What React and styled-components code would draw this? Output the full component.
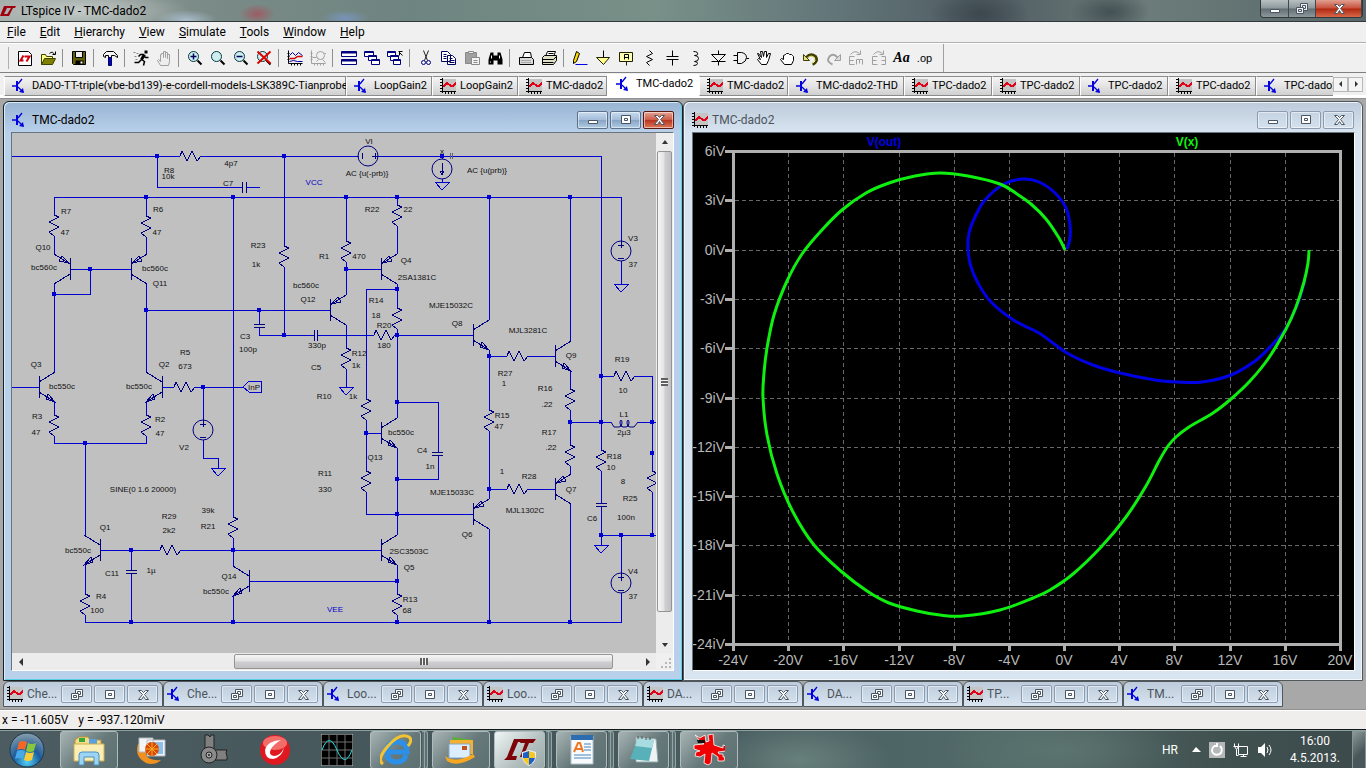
import React from "react";
import styled, { createGlobalStyle, css } from "styled-components";

/* ---------- data ---------- */

const menus = ["File", "Edit", "Hierarchy", "View", "Simulate", "Tools", "Window", "Help"];

const tabs = [
  { title: "DADO-TT-triple(vbe-bd139)-e-cordell-models-LSK389C-Tianprobe", kind: "asc", width: 342 },
  { title: "LoopGain2", kind: "asc", width: 86 },
  { title: "LoopGain2", kind: "plt", width: 86 },
  { title: "TMC-dado2", kind: "plt", width: 89 },
  { title: "TMC-dado2", kind: "asc", width: 92, active: true },
  { title: "TMC-dado2", kind: "plt", width: 89 },
  { title: "TMC-dado2-THD", kind: "asc", width: 116 },
  { title: "TPC-dado2", kind: "plt", width: 88 },
  { title: "TPC-dado2", kind: "plt", width: 88 },
  { title: "TPC-dado2", kind: "asc", width: 88 },
  { title: "TPC-dado2", kind: "plt", width: 88 },
  { title: "TPC-dado2", kind: "asc", width: 88 },
];

const minimized = [
  ["Che...", "plt"],
  ["Che...", "asc"],
  ["Loo...", "asc"],
  ["Loo...", "plt"],
  ["DA...", "plt"],
  ["DA...", "asc"],
  ["TP...", "plt"],
  ["TM...", "asc"],
];

// wires of the schematic, one polyline each
const wires = [
  "12,156 180,156", "201,156 359,156", "378,156 601,156 601,450", "157,156 157,187 242,187",
  "246,187 260,187", "54,215 54,197 621,197 621,241", "54,236 54,254", "146,197 146,216",
  "146,237 146,254", "70,269 131,269", "90,269 90,294 54,294", "54,284 54,372", "146,284 146,372",
  "146,310 330,310", "233,197 233,517", "233,538 233,566", "259,310 259,324", "259,327 259,335 314,335",
  "317,335 374,335", "395,335 473,335", "284,156 284,246", "284,267 284,335", "346,197 346,241",
  "346,262 346,295", "346,269 381,269", "397,197 397,205", "397,226 397,254", "397,284 397,308",
  "397,289 366,289 366,399", "397,329 397,418", "346,325 346,348", "346,369 346,387",
  "489,197 489,320", "489,351 489,410", "489,356 507,356", "528,356 555,356", "570,197 570,341",
  "570,371 570,389", "570,410 570,445", "570,422 611,422", "638,422 656,422", "570,466 570,474",
  "570,504 570,622", "366,420 366,471", "366,433 381,433", "366,492 366,514 473,514",
  "397,402 438,402 438,452", "438,455 438,479 397,479", "397,448 397,535", "489,431 489,499",
  "489,489 507,489", "528,489 555,489", "489,529 489,622", "397,565 397,594", "397,615 397,622",
  "100,550 160,550", "181,550 381,550", "249,581 397,581", "233,596 233,622", "131,550 131,570",
  "131,573 131,622", "85,535 85,443", "85,565 85,594", "85,615 85,622 621,622 621,593",
  "54,402 54,415", "54,436 54,443 146,443 146,436", "146,402 146,415", "12,387 39,387",
  "162,387 174,387", "195,387 243,387", "203,387 203,420", "203,440 203,458 218,458 218,468",
  "442,156 442,159", "442,179 442,182", "621,261 621,284", "601,376 614,376", "635,376 652,376 652,471",
  "652,492 652,535", "601,471 601,503", "601,506 601,545", "601,535 656,535", "621,535 621,574",
];

const dots = [
  [157, 156], [284, 156], [442, 156], [146, 197], [233, 197], [346, 197], [397, 197], [489, 197],
  [570, 197], [90, 269], [54, 294], [146, 310], [259, 310], [284, 335], [346, 269], [397, 289],
  [397, 335], [489, 356], [601, 376], [601, 422], [570, 422], [652, 422], [652, 453], [652, 535],
  [601, 535], [621, 535], [397, 402], [366, 433], [397, 479], [397, 514], [489, 489], [397, 581],
  [233, 550], [131, 550], [131, 622], [233, 622], [397, 622], [489, 622], [570, 622], [85, 443],
  [203, 387],
];

const resistorsV = [
  [54, 215], [146, 216], [284, 246], [346, 241], [397, 205], [397, 308], [346, 348], [366, 399],
  [366, 471], [489, 410], [570, 389], [570, 445], [601, 450], [652, 471], [397, 594], [233, 517],
  [85, 594], [54, 415], [146, 415],
];

const resistorsH = [[180, 156], [374, 335], [507, 356], [507, 489], [614, 376], [160, 550], [174, 387]];

// base x, base y, side of the legs, pnp or npn
const transistors = [
  [70, 269, -1, "pnp"], [131, 269, 1, "pnp"], [330, 310, 1, "pnp"], [381, 269, 1, "pnp"],
  [555, 489, 1, "pnp"], [473, 514, 1, "pnp"], [473, 335, 1, "npn"], [555, 356, 1, "npn"],
  [381, 433, 1, "npn"], [381, 550, 1, "npn"], [39, 387, 1, "npn"], [162, 387, -1, "npn"],
  [100, 550, -1, "npn"], [249, 581, -1, "npn"],
];

const grounds = [[442, 182], [621, 284], [346, 387], [218, 468], [601, 545]];

const labels = [
  ["R8", 169, 173], ["10k", 168, 179], ["4p7", 231, 166], ["C7", 228, 186], ["R7", 66, 214],
  ["47", 65, 235], ["Q10", 43, 250], ["bc560c", 44, 270], ["R6", 158, 212], ["47", 157, 235],
  ["bc560c", 155, 271], ["Q11", 160, 286], ["R23", 258, 248], ["1k", 256, 267], ["R1", 324, 259],
  ["bc560c", 306, 288], ["Q12", 308, 302], ["C3", 245, 339], ["100p", 248, 352], ["330p", 317, 348],
  ["C5", 316, 370], ["R5", 185, 355], ["673", 185, 369], ["Q3", 36, 367], ["bc550c", 62, 389],
  ["Q2", 164, 367], ["bc550c", 139, 389], ["InP", 254, 390], ["R10", 324, 399], ["VI", 369, 144],
  ["AC {u(-prb)}", 367, 176], ["x", 442, 154], ["AC {u(prb)}", 487, 173], ["R22", 372, 212],
  ["22", 408, 212], ["470", 359, 259], ["Q4", 406, 263], ["2SA1381C", 417, 280], ["R14", 376, 303],
  ["18", 376, 318], ["R20", 384, 328], ["180", 384, 348], ["MJE15032C", 451, 308], ["Q8", 457, 326],
  ["MJL3281C", 528, 333], ["R12", 359, 356], ["1k", 356, 368], ["1k", 353, 399], ["R27", 505, 376],
  ["1", 504, 386], ["Q9", 571, 358], ["R16", 545, 391], ["V3", 633, 241], ["37", 633, 267],
  ["R19", 622, 362], ["10", 623, 393], ["R3", 37, 419], ["47", 36, 435], ["R2", 160, 422],
  ["47", 160, 436], ["V2", 184, 450], ["SINE(0 1.6 20000)", 143, 492], ["R29", 169, 519],
  ["2k2", 169, 533], ["39k", 208, 513], ["R21", 208, 529], ["Q1", 105, 530], ["bc550c", 78, 553],
  ["C11", 112, 576], ["1µ", 151, 573], ["Q14", 229, 579], ["bc550c", 216, 594], ["R4", 101, 599],
  ["100", 97, 613], ["R11", 325, 476], ["330", 325, 492], [".22", 547, 407], ["R15", 502, 418],
  ["47", 499, 429], ["R17", 549, 435], [".22", 551, 450], ["bc550c", 401, 435], ["Q13", 375, 460],
  ["C4", 422, 453], ["1n", 430, 469], ["MJE15033C", 452, 495], ["1", 502, 474], ["R28", 529, 479],
  ["Q7", 571, 492], ["MJL1302C", 525, 513], ["Q6", 467, 537], ["L1", 624, 417], ["2µ3", 624, 435],
  ["R18", 614, 459], ["10", 611, 470], ["8", 623, 484], ["R25", 630, 501], ["C6", 592, 521],
  ["100n", 626, 520], ["2SC3503C", 409, 554], ["Q5", 409, 570], ["R13", 410, 602], ["68", 407, 613],
  ["V4", 633, 574], ["37", 633, 599],
];

const greenTrace = [
  [1065, 250], [1059, 238], [1046, 219], [1031, 204], [1017, 194], [1000, 184], [968, 176], [940, 173],
  [915, 176], [889, 183], [866, 193], [842, 210], [821, 231], [802, 254], [787, 281], [774, 315],
  [767, 348], [764, 373], [763, 398], [767, 435], [777, 474], [793, 512], [814, 545], [842, 572],
  [867, 591], [889, 603], [917, 611], [940, 615], [963, 616], [1000, 610], [1033, 598], [1050, 590],
  [1073, 574], [1102, 546], [1126, 517], [1146, 486], [1159, 461], [1168, 446], [1176, 437],
  [1189, 427], [1213, 413], [1231, 399], [1250, 381], [1268, 359], [1286, 329], [1296, 307],
  [1304, 282], [1308, 263], [1309, 250],
];

const blueTrace = [
  [1067, 249], [1070, 238], [1070, 225], [1066, 208], [1055, 193], [1039, 182], [1023, 179],
  [1004, 184], [985, 200], [975, 217], [969, 233], [968, 250], [971, 267], [978, 283], [991, 302],
  [1015, 321], [1039, 333], [1067, 353], [1093, 365], [1120, 373], [1155, 380], [1178, 382],
  [1202, 382], [1231, 375], [1255, 361], [1272, 345], [1286, 328], [1298, 303], [1305, 280],
];

// smooth curve through the points
const toPath = pts =>
  pts.slice(0, -1).reduce((d, p, i) => {
    const a = pts[i - 1] || p;
    const q = pts[i + 1];
    const b = pts[i + 2] || q;
    const c1 = [p[0] + (q[0] - a[0]) / 6, p[1] + (q[1] - a[1]) / 6];
    const c2 = [q[0] - (b[0] - p[0]) / 6, q[1] - (b[1] - p[1]) / 6];
    return `${d} C${c1.join(" ")} ${c2.join(" ")} ${q.join(" ")}`;
  }, `M${pts[0].join(" ")}`);

/* ---------- small icons ---------- */

const AscIcon = () => (
  <Icon viewBox="0 0 16 16">
    <path d="M0 8h5M10 1L6 6M6 9l5 5" stroke="#0000e0" strokeWidth="1.3" fill="none" />
    <path d="M4 3h2v10H4z" fill="#0000e0" />
    <path d="M7 14l4-4 1 5z" fill="#0000e0" />
  </Icon>
);

const PltIcon = () => (
  <Icon viewBox="0 0 16 16" shapeRendering="crispEdges">
    <path d="M2 1h14v12H2z" fill="#c4c4c4" />
    <path d="M2 0v15M2 13h14M0 1h2M0 4h2M0 7h2M0 10h2M0 13h2M5 13v3M8 13v3M11 13v3M14 13v3" stroke="#000" fill="none" />
    <path d="M3 9l4-4 4 3h2l3-3" stroke="#e00018" strokeWidth="2" fill="none" />
  </Icon>
);

const LtLogo = () => (
  <Icon viewBox="0 0 16 16">
    <path d="M4 3h4L4 11h4l-1 2H0zM8 3h8l-1 2h-2l-4 8H6l5-8H7z" fill="#a00010" />
  </Icon>
);

const glyphs = {
  min: <path d="M2 7h9v3H2z" />,
  max: (
    <>
      <path d="M2 2h9v8H2z" />
      <path d="M5 5h3v2H5z" />
    </>
  ),
  restore: (
    <>
      <path d="M5 1h7v7H5z" />
      <path d="M7 3h3v3H7z" />
      <path d="M1 5h7v6H1z" />
      <path d="M3 7h3v2H3z" />
    </>
  ),
  close: <path d="M2 2h3l2 2 2-2h3L8 6l4 5H9L7 8l-2 3H2l4-5z" />,
};

const WinGlyph = ({ kind, stroke = "#4a5564", fill = "#fff" }) => (
  <svg width="14" height="13" viewBox="-0.5 -0.5 14 13" fill={fill} stroke={stroke}>
    {glyphs[kind]}
  </svg>
);

const lens = (
  <>
    <circle cx="6" cy="6" r="5" fill="#cfeef0" stroke="#00393c" />
    <path d="M10 10l4 4" stroke="#000" strokeWidth="2" />
  </>
);

const hand = "M4 15l-3-5 1-1 2 2V4h1V3h2v4V1h2v6V2h2v6V4h2v7l-1 4z";

// toolbar pictures; null is a separator
const tools = [
  ["New schematic", <><path d="M1 1h10l3 3v11H1z" fill="#fff" stroke="#000" /><path d="M6 5L3 10h3M7 6h5l-3 5" stroke="#d00010" strokeWidth="2" fill="none" /></>],
  ["Open", <><path d="M1 14V4h4l1 2h6v3" fill="#ffff80" stroke="#404000" /><path d="M1 14l3-6h11l-3 6z" fill="#808000" stroke="#404000" /><path d="M9 3q3-3 5 1M12 4h3V1" fill="none" stroke="#000" /></>],
  null,
  ["Save", <><path d="M1 1h13v13H2l-1-1z" fill="#606000" stroke="#000" /><path d="M4 1h7v6H4z" fill="#eee" stroke="#000" /><path d="M4 10h8v4H4z" fill="#000" /><path d="M9 11h2v2H9z" fill="#fff" /></>],
  null,
  ["Control panel", <><path d="M1 6V4l3-3h7l4 4v2l-3-2H9v2H6V5H3v2z" fill="#f4f4f4" stroke="#000" /><path d="M6 7h3v8H6z" fill="#0000c8" stroke="#000060" /></>],
  null,
  ["Run", <><path d="M11 0h3v3h-3z" fill="#000" /><path d="M11 4L8 9" stroke="#000" strokeWidth="3" /><path d="M8 9l3 2-1 4M8 9l-3 3H1M10 4L7 4 5 6M10 5l2 2h3" stroke="#000" strokeWidth="1.5" fill="none" /><path d="M0 2h2M3 3h2M1 6h2M2 9h2" stroke="#888" /></>],
  ["Halt", <path d={hand} fill="#eee" stroke="#a0a0a0" />],
  null,
  ["Zoom in", <>{lens}<path d="M6 3v6M3 6h6" stroke="#000060" strokeWidth="1.5" /></>],
  ["Pan", lens],
  ["Zoom out", <>{lens}<path d="M3 6h6" stroke="#000060" strokeWidth="1.5" /></>],
  ["Zoom full extents", <>{lens}<path d="M1 1l13 12M14 1L1 13" stroke="#e00000" strokeWidth="2" /></>],
  null,
  ["Autorange", <><path d="M1 0v13h14M0 3h2M0 6h2M0 9h2M4 13v2M7 13v2M10 13v2M13 13v2" stroke="#000" fill="none" /><path d="M2 5l3-3 3 3 3-3 4 3" stroke="#0000a0" fill="none" /><path d="M2 8h5l3-2h5" stroke="#d00000" strokeWidth="1.5" fill="none" /><path d="M2 11l4-1 4 1h5" stroke="#0000a0" fill="none" /></>],
  ["Plot settings", <><path d="M1 0v13h14M0 3h2M0 6h2M0 9h2M4 13v2M7 13v2M10 13v2M13 13v2" stroke="#a0a0a0" fill="none" /><circle cx="10" cy="5" r="4" fill="none" stroke="#a0a0a0" /><path d="M2 7h4M6 11l2-2M12 9l3 3M14 3h2" stroke="#a0a0a0" /></>],
  null,
  ["Tile", <><path d="M0 1h15v5H0zM0 9h15v5H0z" fill="#fff" stroke="#000080" /><path d="M0 2h15M0 10h15" stroke="#000080" strokeWidth="2" /></>],
  ["Cascade", <><path d="M0 1h9v5H0zM4 5h8v5H4zM7 9h8v5H7z" fill="#fff" stroke="#000080" /><path d="M0 2h9M4 6h8M7 10h8" stroke="#000080" strokeWidth="1" /></>],
  ["Close all", <><path d="M0 1h8v5H0zM3 5h8v5H3zM6 9h7v5H6z" fill="#fff" stroke="#000080" /><path d="M0 2h8M3 6h8M6 10h7" stroke="#000080" strokeWidth="1" /><path d="M11 1h4M12 1v4M12 2l3 3" stroke="#000" /></>],
  null,
  ["Cut", <><path d="M5 0l4 10M10 0L6 10" stroke="#222" /><circle cx="5" cy="12" r="2" fill="none" stroke="#000080" /><circle cx="10" cy="12" r="2" fill="none" stroke="#000080" /></>],
  ["Copy", <><path d="M0 1h6l3 3v7H0zM6 5h5l3 3v6H6z" fill="#fff" stroke="#000060" /><path d="M2 4h3M2 6h3M2 8h3M8 8h3M8 10h5M8 12h5" stroke="#000060" /></>],
  ["Paste", <><path d="M1 2h11v11H1z" fill="#a0a0a0" stroke="#888" /><path d="M4 1h5v2H4z" fill="#eee" stroke="#888" /><path d="M7 7h8v7H7z" fill="#f4f4f4" stroke="#888" /><path d="M9 10h4M9 12h4" stroke="#888" /></>],
  ["Find", <><path d="M3 2h3v3h4V2h3l2 7v5h-5v-4H6v4H1V9z" fill="#000" /><path d="M4 5v3M12 5v3M3 11v1" stroke="#fff" /></>],
  null,
  ["Print", <><path d="M4 7l2-5h6l1 5" fill="#fff" stroke="#000" /><path d="M1 7h12l2 2v5H1z" fill="#d8d8d8" stroke="#000" /><path d="M3 10h10M3 12h10" stroke="#777" strokeDasharray="1 1" /></>],
  ["Print setup", <><path d="M4 6l2-5h8l-2 5" fill="#fff" stroke="#000" /><path d="M1 7l2-2h12v5l-3 4H1z" fill="#e0e0c8" stroke="#000" /><path d="M7 3h5M1 9h11M1 12h11M12 9l3-3" stroke="#000" /></>],
  null,
  ["Wire", <><path d="M4 1l3 2-3 8-3 2v-3z" fill="#ffd800" stroke="#000" /><path d="M3 14h12" stroke="#0000e0" /></>],
  ["Ground", <><path d="M8 0v7" stroke="#000" /><path d="M1 7h13l-6 7z" fill="#ffff90" stroke="#202000" /></>],
  ["Label net", <><path d="M1 2h13v9H1zM8 11v4" fill="#ffffb0" stroke="#202000" /><path d="M6 9V4h4v5M6 7h4" fill="none" stroke="#000" /></>],
  ["Resistor", <path d="M8 0l3 3-6 3 6 3-6 3 3 3" fill="none" stroke="#000" />],
  ["Capacitor", <path d="M8 0v6M2 6h12M2 9h12M8 9v6" fill="none" stroke="#000" />],
  ["Inductor", <path d="M6 1q5 0 4 3-1 1-3 1 4 0 4 3t-4 3q3 0 3 2t-4 2" fill="none" stroke="#000" />],
  ["Diode", <path d="M8 0v4M1 4h14l-7 7zM1 11h14M8 11v4" fill="none" stroke="#000" />],
  ["Component", <path d="M0 5h4M0 10h4M4 2h4q5 1 5 5t-5 6H4zM13 8h3" fill="none" stroke="#000" />],
  ["Move", <path d="M5 14L1 9l1-1 2 1-3-6h1l3 4-1-6h2l1 5 1-5h2v6l2-4h2l-2 7-2 4z" fill="#fff" stroke="#000" />],
  ["Drag", <path d="M5 14l-4-5 1-1 2 1V5l2-1 1-1h2l1 1h2l1 1 1 1v4l-2 4z" fill="#fff" stroke="#000" />],
  ["Undo", <><path d="M4 7q4-5 9-1 3 5-3 8" fill="none" stroke="#404000" strokeWidth="3" /><path d="M5 7q4-3 7 0 2 4-2 6" fill="none" stroke="#e8e080" /><path d="M1 4v6h6z" fill="#e8e080" stroke="#404000" /></>],
  ["Redo", <><path d="M12 7Q8 2 4 6q-4 5 3 8" fill="none" stroke="#a0a0a0" strokeWidth="2" /><path d="M15 4v6H9z" fill="#ddd" stroke="#a0a0a0" /></>],
  ["Rotate", <path d="M6 6H1v8h5M1 10h4M8 14V9M8 9h6v5M11 9v4M2 4q4-5 9-1M12 0v4H8" fill="none" stroke="#a0a0a0" />],
  ["Mirror", <path d="M6 6H1v8h5M1 10h4M10 6h4v8h-4M14 10h-4M2 4q4-5 9-1M12 0v4H8" fill="none" stroke="#a0a0a0" />],
  ["Text", "Aa"],
  ["SPICE directive", ".op"],
];

/* ---------- schematic and plot ---------- */

const Resistor = ({ x, y, flat }) => (
  <polyline
    points={
      flat
        ? `${x},${y} ${x + 2},${y - 5} ${x + 7},${y + 5} ${x + 12},${y - 5} ${x + 17},${y + 5} ${x + 21},${y}`
        : `${x},${y} ${x + 5},${y + 2} ${x - 5},${y + 7} ${x + 5},${y + 12} ${x - 5},${y + 17} ${x},${y + 21}`
    }
  />
);

const Transistor = ({ x, y, dir, type }) => {
  const e = type === "pnp" ? -1 : 1;
  const tip = type === "pnp" ? [1, 6] : [16, 15];
  const tail = type === "pnp" ? [[11, 8], [8, 13]] : [[9, 7], [7, 12]];
  const at = ([a, b]) => `${x + dir * a},${y + e * b}`;
  return (
    <>
      <path d={`M${x} ${y - 11}V${y + 11}M${x} ${y - 5}l${dir * 16} -10M${x} ${y + 5}l${dir * 16} 10`} />
      <polygon points={`${at(tip)} ${at(tail[0])} ${at(tail[1])}`} />
    </>
  );
};

const Schematic = () => (
  <SchematicSvg viewBox="12 133 644 520" width="644" height="520">
    <g fill="none" stroke="#0000d0" shapeRendering="crispEdges">
      {wires.map(w => (
        <polyline key={w} points={w} />
      ))}
      {grounds.map(([x, y]) => (
        <path key={`${x}-${y}`} d={`M${x - 7} ${y}h15l-8 8z`} />
      ))}
      <path d="M243 387l6-6h12v11h-12z" />
    </g>
    <g fill="#0000d0" shapeRendering="crispEdges">
      {dots.map(([x, y]) => (
        <rect key={`${x}-${y}`} x={x - 2} y={y - 2} width="4" height="4" />
      ))}
      <path d="M450 153h1v6h-1zM452 153h1v6h-1z" fill="#606070" />
    </g>
    <g fill="none" stroke="#000080" shapeRendering="crispEdges">
      {resistorsV.map(([x, y]) => (
        <Resistor key={`${x}-${y}`} x={x} y={y} />
      ))}
      {resistorsH.map(([x, y]) => (
        <Resistor key={`${x}-${y}`} x={x} y={y} flat />
      ))}
      {transistors.map(([x, y, dir, type]) => (
        <Transistor key={`${x}-${y}`} x={x} y={y} dir={dir} type={type} />
      ))}
      <path d="M242 182v11M246 182v11M254 324h11M254 327h11M314 330v11M317 330v11M432 452h11M432 455h11M596 503h11M596 506h11M126 570h11M126 573h11" />
    </g>
    <g fill="none" stroke="#000080">
      <path d="M611 422l3 5h5q3 0 3-4 0-3-1-3t-1 3q0 4 3 4h3q3 0 3-4 0-3-1-3t-1 3q0 4 3 4h4l4-5" />
      <circle cx="368" cy="156" r="10" />
      <circle cx="442" cy="169" r="10" />
      <circle cx="203" cy="430" r="10" />
      <circle cx="621" cy="251" r="10" />
      <circle cx="621" cy="583" r="10" />
      <path shapeRendering="crispEdges" d="M362 153v6M372 156h6M375 153v6M442 163v12M440 171l2 4 2-4zM200 424h6M203 420v7M200 437h6M618 245h6M621 241v7M618 258h6M618 577h6M621 574v7M618 590h6" />
    </g>
    <PartText>
      {labels.map(([text, x, y]) => (
        <text key={`${x}-${y}`} x={x} y={y}>{text}</text>
      ))}
      <NetText x="314" y="185">VCC</NetText>
      <NetText x="335" y="612">VEE</NetText>
    </PartText>
  </SchematicSvg>
);

const gridX = i => Math.round(733 + (i * 607) / 11);
const gridY = i => Math.round(151 + (i * 493) / 10);

const Plot = () => (
  <PlotSvg viewBox="693 133 661 537">
    <g stroke="#686868" strokeDasharray="4 3" shapeRendering="crispEdges">
      {[...Array(10)].map((_, i) => (
        <path key={i} d={`M${gridX(i + 1)} 153V643`} />
      ))}
      {[...Array(9)].map((_, i) => (
        <path key={i} d={`M735 ${gridY(i + 1)}H1339`} />
      ))}
    </g>
    <g stroke="#b0b0b0" strokeWidth="3" fill="none" shapeRendering="crispEdges">
      <path d="M733 151H1340V644H733z" />
      {[...Array(12)].map((_, i) => (
        <path key={i} d={`M${gridX(i)} 644v7`} />
      ))}
      {[...Array(11)].map((_, i) => (
        <path key={i} d={`M725 ${gridY(i)}h8`} />
      ))}
    </g>
    <path d={toPath(blueTrace)} fill="none" stroke="#0000e4" strokeWidth="3" />
    <path d={toPath(greenTrace)} fill="none" stroke="#10f010" strokeWidth="3" />
    <AxisText>
      {[...Array(11)].map((_, i) => (
        <text key={i} x="725" y={gridY(i) + 5} textAnchor="end">{`${6 - i * 3}iV`}</text>
      ))}
      {[...Array(12)].map((_, i) => (
        <text key={i} x={gridX(i)} y="665" textAnchor="middle">{`${i * 4 - 24}V`}</text>
      ))}
    </AxisText>
    <TraceText x="884" y="146" fill="#0000e4">V(out)</TraceText>
    <TraceText x="1187" y="146" fill="#10f010">V(x)</TraceText>
  </PlotSvg>
);

/* ---------- taskbar pictures ---------- */

const taskItems = [
  ["Explorer", true, false, <><path d="M2 6l4-3h9l2 3h11v20H2z" fill="#f4dc88" stroke="#b89438" /><path d="M6 4h6v4H6z" fill="#38a838" /><path d="M16 5h8v5h-8z" fill="#58a0e0" /><path d="M1 10h30v17H1z" fill="#fbeeb4" stroke="#d0b050" /><path d="M6 31V21q0-3 3-3h14q3 0 3 3v10h-5v-8H11v8z" fill="#9cd4f4" stroke="#4c90c0" /></>],
  ["Presentations", false, false, <><path d="M3 10q-4 13 8 19 9 3 15-3-12 1-15-5V8z" fill="#f09020" /><path d="M4 4h14v14H4zM12 6h18v16H12z" fill="#f4f4f4" stroke="#b0b8c0" /><path d="M14 8h14v12H14z" fill="#8cc0ec" /><circle cx="17" cy="15" r="7" fill="#d84808" /><path d="M17 8v14M10 15h14M12 10l10 10M22 10L12 20" stroke="#f8b020" /></>],
  ["Tool", false, false, <><path d="M8 1h3l2 2 1-2h3v14H8zM16 16h14l-1 3 1 3v4H16z" fill="#808080" stroke="#222" /><circle cx="12" cy="21" r="8" fill="#8a8a8a" stroke="#222" /><circle cx="12" cy="21" r="3" fill="#aaa" stroke="#222" /><circle cx="12" cy="21" r="1" fill="#222" /></>],
  ["Antivirus", false, false, <><circle cx="16" cy="16" r="15" fill="#e01820" /><ellipse cx="16" cy="9" rx="12" ry="7" fill="#f46c68" /><path d="M22 6Q8 7 6 16q0 9 8 9 9-2 11-11-4 8-10 8-6-1-3-7 3-5 10-9z" fill="#fff" /></>],
  ["Scope", false, false, <><path d="M0 0h32v32H0z" fill="#000" stroke="#ddd" /><path d="M8 0v32M16 0v32M24 0v32M0 8h32M0 16h32M0 24h32" stroke="#707070" /><path d="M1 16Q8-3 16 16t15 0" fill="none" stroke="#20e0e0" /></>],
  ["Browser", true, true, <><path d="M26 21q-2 7-9 7-10 0-10-10T17 8q10 0 10 10H9" fill="none" stroke="#2c90e8" strokeWidth="5" /><path d="M3 30Q-4 26 8 12T29 3q4 3-1 9" fill="none" stroke="#f4c430" strokeWidth="3" /></>],
  ["Mail", true, false, <><path d="M8 3l20 3-3 17L4 20z" fill="#5cac38" /><path d="M5 6h23v14H5z" fill="#f4b030" /><path d="M4 10h21v14H4z" fill="#dceefc" stroke="#80a8c8" /><path d="M17 12h5v4h-5z" fill="#c05020" /><path d="M0 22q10 8 28-2l2 3Q12 34 2 27z" fill="#f8a820" /></>],
  ["LTspice IV", true, true, <><path d="M10 5h9l-2 3h-3L8 22h5l-1 4H0l3-3zM18 5h14l-3 4h-4l-6 14h-3l5-14h-5z" fill="#7c0408" /><path d="M25 16l7 2q1 10-7 14-8-4-7-14z" fill="#eee" /><path d="M19 19l6-2v7h-6zM25 24h6q-1 5-6 7z" fill="#1c60c8" /><path d="M25 17l6 2v5h-6zM19 24h6v7q-5-2-6-7z" fill="#f4c820" /></>, true],
  ["WordPad", true, true, <><path d="M5 2h22v28H5z" fill="#f8fafc" stroke="#b0c0d0" /><path d="M5 1h22v5H5z" fill="#2c6cb0" /><path d="M18 10h7M18 13h7M18 16h7M8 21h17M8 24h17" stroke="#4484c0" /><path d="M8 18l4-9h2l3 9M9 15h7" fill="none" stroke="#f07820" strokeWidth="2" /></>],
  ["Notepad", true, true, <><path d="M8 3l20 2 2 23H8z" fill="#eef4f4" stroke="#90a8a8" /><path d="M10 4l16 2-5 21L2 25z" fill="#58b0b8" /><path d="M10 4l16 2-2 8-17-2z" fill="#a8dce0" /><path d="M10 2v3M14 2v3M18 3v3M22 3v3" stroke="#555" /></>],
  ["Mascot", true, false, <><path d="M2 1l5 3 5-3 1 7 3-1-1-6 5-1 1 11 9 3v-3l3 1v5l-8 1 1 2h4v3h2l-1 4h-6v-4l-6-4-1 10-3 2-4-2 1-9-5 3-5-1 1-4 4-1-6-2v-4l10-1-4-3z" fill="#f00000" stroke="#fff" strokeWidth="0.8" /><path d="M4 6h8v3H5z" fill="#111" /></>],
];

/* ---------- page ---------- */

const Captions = ({ active, mini }) => (
  <CaptionRow>
    {[mini ? "restore" : "min", "max", "close"].map(kind => (
      <CaptionButton key={kind} aria-label={kind} $red={active && kind === "close"} $active={active}>
        <WinGlyph kind={kind} />
      </CaptionButton>
    ))}
  </CaptionRow>
);

const Arrow = ({ d }) => (
  <svg width="8" height="8" viewBox="0 0 8 8">
    <path d={d} fill="#333" />
  </svg>
);

const App = () => (
  <Screen>
    <GlobalStyle />
    <TitleBar>
      <LtLogo />
      <TitleText>LTspice IV - TMC-dado2</TitleText>
      <AppButtons>
        <AppButton $width={28} aria-label="Minimize"><WinGlyph kind="min" /></AppButton>
        <AppButton $width={27} aria-label="Restore"><WinGlyph kind="restore" fill="#eee" /></AppButton>
        <AppButton $width={46} $red aria-label="Close"><WinGlyph kind="close" /></AppButton>
      </AppButtons>
    </TitleBar>

    <MenuBar>
      {menus.map(m => (
        <MenuItem key={m}>
          <u>{m[0]}</u>
          {m.slice(1)}
        </MenuItem>
      ))}
    </MenuBar>

    <Toolbar>
      {tools.map((tool, i) =>
        tool === null ? (
          <Separator key={i} />
        ) : (
          <ToolButton key={i} aria-label={tool[0]}>
            {typeof tool[1] === "string" ? (
              <ToolText $italic={tool[1] === "Aa"}>{tool[1]}</ToolText>
            ) : (
              <Icon viewBox="-0.5 -0.5 16 16">{tool[1]}</Icon>
            )}
          </ToolButton>
        )
      )}
      <ToolbarEnd />
    </Toolbar>

    <TabStrip>
      <TabList>
        {tabs.map((t, i) => (
          <Tab key={i} $width={t.width} $active={t.active}>
            {t.kind === "asc" ? <AscIcon /> : <PltIcon />}
            <span>{t.title}</span>
          </Tab>
        ))}
      </TabList>
      <TabArrow aria-label="Scroll left"><Arrow d="M5 1v6L2 4z" /></TabArrow>
      <TabArrow aria-label="Scroll right"><Arrow d="M3 1v6l3-3z" /></TabArrow>
    </TabStrip>

    <Workspace>
      <Windows>
        <ChildWindow $active>
          <ChildTitle>
            <AscIcon />
            <TitleText>TMC-dado2</TitleText>
            <Captions active />
          </ChildTitle>
          <SchematicClient>
            <Canvas>
              <Schematic />
            </Canvas>
            <ScrollBar $vertical>
              <ScrollArrow aria-label="Up"><Arrow d="M1 6h6L4 2z" /></ScrollArrow>
              <ScrollSpace $size={1} />
              <ScrollThumb $vertical $size={461}><Grip $vertical /></ScrollThumb>
              <ScrollSpace $size={24} />
              <ScrollArrow aria-label="Down"><Arrow d="M1 2h6L4 6z" /></ScrollArrow>
            </ScrollBar>
            <ScrollBar>
              <ScrollArrow aria-label="Left"><Arrow d="M6 0v8L2 4z" /></ScrollArrow>
              <ScrollSpace $size={206} />
              <ScrollThumb $size={378}><Grip /></ScrollThumb>
              <ScrollSpace $size={26} />
              <ScrollArrow aria-label="Right"><Arrow d="M2 0v8l4-4z" /></ScrollArrow>
            </ScrollBar>
            <SizeGrip viewBox="0 0 17 17">
              <path d="M13 5h2v2h-2zM13 9h2v2h-2zM9 9h2v2H9zM13 13h2v2h-2zM9 13h2v2H9zM5 13h2v2H5z" fill="#b8b8b8" />
            </SizeGrip>
          </SchematicClient>
        </ChildWindow>

        <ChildWindow>
          <ChildTitle>
            <PltIcon />
            <TitleText>TMC-dado2</TitleText>
            <Captions />
          </ChildTitle>
          <PlotClient>
            <Plot />
          </PlotClient>
        </ChildWindow>
      </Windows>

      <MinimizedRow>
        {minimized.map(([title, kind], i) => (
          <MinimizedWindow key={i}>
            {kind === "asc" ? <AscIcon /> : <PltIcon />}
            <MinimizedTitle>{title}</MinimizedTitle>
            <Captions mini />
          </MinimizedWindow>
        ))}
      </MinimizedRow>
    </Workspace>

    <StatusBar>
      <span>x = -11.605V</span>
      <span>y = -937.120miV</span>
    </StatusBar>

    <Taskbar>
      <StartButton aria-label="Start">
        <svg width="38" height="38" viewBox="0 0 38 38">
          <defs>
            <radialGradient id="orb" cx="50%" cy="85%" r="80%">
              <stop offset="0" stopColor="#50d0f8" />
              <stop offset="0.5" stopColor="#1c5c9c" />
              <stop offset="1" stopColor="#8098a8" />
            </radialGradient>
          </defs>
          <circle cx="19" cy="19" r="17" fill="url(#orb)" stroke="#183850" />
          <path d="M11 11q4-2 8 0l-2 8q-4-2-8 0z" fill="#f06828" />
          <path d="M20 12q4 2 8 0l-2 8q-4 2-8 0z" fill="#88c838" />
          <path d="M9 20q4-2 8 0l-2 8q-4-2-8 0z" fill="#48a8e8" />
          <path d="M18 21q4 2 8 0l-2 8q-4 2-8 0z" fill="#f8cc38" />
        </svg>
      </StartButton>
      {taskItems.map(([name, framed, stacked, art, current]) => (
        <TaskSlot key={name}>
          <TaskButton aria-label={name} $framed={framed} $current={current}>
            <svg width="32" height="32" viewBox="0 0 32 32">{art}</svg>
          </TaskButton>
          {stacked && <TaskStack />}
        </TaskSlot>
      ))}
      <Tray>
        <Language>HR</Language>
        <svg width="9" height="5" viewBox="0 0 9 5"><path d="M0 5h9L4 0z" fill="#fff" /></svg>
        <svg width="16" height="16" viewBox="0 0 16 16">
          <path d="M0 0h16v16H0z" fill="#b4b8b8" />
          <path d="M5 4q-4 5 0 8 4 2 7-1 2-4-1-7M5 4h3V1" fill="none" stroke="#fff" strokeWidth="2" />
        </svg>
        <svg width="16" height="16" viewBox="-0.5 -0.5 16 16">
          <path d="M5 4h9v8H5zM7 14h6M10 12v2M3 7v6h2M1 1v3l2 3 2-3V1M0 4h5" fill="none" stroke="#fff" />
        </svg>
        <svg width="16" height="16" viewBox="0 0 16 16">
          <path d="M1 5h3l4-4v14l-4-4H1z" fill="#fff" />
          <path d="M10 5q2 3 0 6M12 3q4 5 0 10" fill="none" stroke="#fff" />
        </svg>
        <Clock>
          <span>16:00</span>
          <span>4.5.2013.</span>
        </Clock>
      </Tray>
      <ShowDesktop aria-label="Show desktop" />
    </Taskbar>
  </Screen>
);

/* ---------- styles ---------- */

const GlobalStyle = createGlobalStyle`
  * {
    box-sizing: border-box;
  }
  body {
    margin: 0;
    overflow: hidden;
    font-family: Roboto, "Liberation Sans", sans-serif;
    font-size: 12px;
    color: #000;
  }
  button {
    margin: 0;
    padding: 0;
    border: 0;
    background: none;
    font: inherit;
    color: inherit;
  }
  svg {
    display: block;
  }
`;

const center = css`
  display: flex;
  align-items: center;
  justify-content: center;
`;

const Screen = styled.div`
  display: flex;
  flex-direction: column;
  min-height: 100vh;
  background: #f0f0f0;
`;

const Icon = styled.svg`
  flex: none;
  width: 16px;
  height: 16px;
`;

const TitleBar = styled.header`
  display: flex;
  align-items: center;
  gap: 5px;
  height: 22px;
  border-bottom: 1px solid #30383a;
  background: radial-gradient(ellipse 30px 10px at 186px 20px, #a8bccc, transparent),
    radial-gradient(ellipse 18px 10px at 257px 14px, #9c5c64, transparent),
    radial-gradient(ellipse 24px 8px at 345px 18px, #7894b8, transparent),
    radial-gradient(ellipse 110px 22px at 80px 11px, #c4cac8, transparent),
    radial-gradient(ellipse 50px 24px at 980px 14px, #3c484e, transparent),
    radial-gradient(ellipse 40px 20px at 1110px 12px, #445054, transparent),
    linear-gradient(90deg, #a0aaa6, #7c8c88 14%, #6e8480 30%, #789088 48%, #64787a 60%, #505c62 72%, #6c7c7a 84%, #58686a);
`;

const TitleText = styled.span`
  flex: 1;
  white-space: nowrap;
`;

const AppButtons = styled.div`
  display: flex;
  align-self: flex-start;
  height: 18px;
  margin-right: 3px;
  border: 1px solid #30383c;
  border-top: 0;
  border-radius: 0 0 4px 4px;
  overflow: hidden;
`;

const AppButton = styled.button`
  ${center}
  width: ${props => props.$width}px;
  border-right: 1px solid #40484c;
  background: ${props =>
    props.$red
      ? "linear-gradient(#e0a090, #c8503c 48%, #b02810 52%, #d86848)"
      : "linear-gradient(#b8c0c2, #8c989c 48%, #626e72 52%, #8c989a)"};
`;

const MenuBar = styled.nav`
  display: flex;
  align-items: center;
  gap: 14px;
  height: 21px;
  padding: 0 7px;
  border-bottom: 1px solid #b0b0b0;
`;

const MenuItem = styled.button`
  line-height: 16px;
`;

const Toolbar = styled.div`
  display: flex;
  align-items: center;
  height: 30px;
  padding-left: 8px;
  border-top: 1px solid #fff;
  border-bottom: 1px solid #808080;

  &::before {
    content: "";
    width: 4px;
    height: 22px;
    margin-left: -4px;
    margin-right: 4px;
    border-right: 1px solid #b0b0b0;
  }
`;

const ToolButton = styled.button`
  ${center}
  width: 23px;
  height: 22px;
`;

const ToolText = styled.span`
  font-family: ${props => (props.$italic ? '"Liberation Serif", serif' : '"Liberation Sans", sans-serif')};
  font-style: ${props => (props.$italic ? "italic" : "normal")};
  font-weight: ${props => (props.$italic ? "bold" : "normal")};
  font-size: ${props => (props.$italic ? 14 : 11)}px;
`;

const Separator = styled.div`
  width: 8px;
  height: 18px;
  background: linear-gradient(90deg, transparent 3px, #909090 3px, #909090 4px, transparent 4px);
`;

const ToolbarEnd = styled.div`
  width: 8px;
  height: 28px;
  border-right: 1px solid #a0a0a0;
`;

const TabStrip = styled.div`
  display: flex;
  align-items: center;
  height: 26px;
  padding: 0 3px 0 2px;
  border-bottom: 1px solid #909090;
  background: linear-gradient(#f0f0f0 22px, #fff 22px);
`;

const TabList = styled.div`
  display: flex;
  flex: 1;
  align-items: center;
  height: 25px;
  min-width: 0;
  padding-left: 2px;
  overflow: hidden;
`;

const Tab = styled.button`
  display: flex;
  flex: none;
  align-items: center;
  gap: 4px;
  width: ${props => props.$width}px;
  height: 20px;
  padding-left: 7px;
  border: 1px solid #8c8c8c;
  border-left-color: #fff;
  background: linear-gradient(#f4f4f4, #e4e4e4 50%, #d0d0d0);
  font-size: 11px;
  white-space: nowrap;
  ${props => (props.$active ? activeTab : "")}
`;

const activeTab = css`
  height: 24px;
  padding-left: 8px;
  padding-bottom: 4px;
  border-color: #fff;
  background: #fff;
`;

const TabArrow = styled.button`
  ${center}
  width: 15px;
  height: 15px;
  margin-bottom: 3px;
  border: 1px solid #b8b8b8;
  background: #f4f4f4;
`;

const Workspace = styled.main`
  display: flex;
  flex: 1;
  flex-direction: column;
  padding: 2px 3px;
  background: #a8a8a8;
  border-bottom: 1px solid #909090;
`;

const Windows = styled.div`
  display: flex;
  flex: 1;
`;

const ChildWindow = styled.section`
  display: flex;
  flex: 1;
  flex-direction: column;
  min-width: 0;
  padding: 0 8px 9px 7px;
  border: 1px solid ${props => (props.$active ? "#182028" : "#50585c")};
  border-radius: 6px 6px 0 0;
  background: ${props =>
    props.$active ? "linear-gradient(#98b4d2, #b8d0ea 30px)" : "linear-gradient(#bccada, #d8e4f0 30px)"};
  color: ${props => (props.$active ? "#000" : "#4c545c")};
  box-shadow: inset 1px 1px 0 ${props => (props.$active ? "#d8ecf8" : "#eef4fa")},
    inset -1px -1px 0 ${props => (props.$active ? "#58d0e8" : "#f4f8fc")};
`;

const ChildTitle = styled.div`
  display: flex;
  align-items: center;
  gap: 4px;
  height: 30px;
  padding: 5px 0 0 1px;
`;

const CaptionRow = styled.div`
  display: flex;
  gap: 2px;
`;

const CaptionButton = styled.button`
  ${center}
  width: 31px;
  height: 18px;
  border: 1px solid ${props => (props.$active ? "#5c7088" : "#8c9cb0")};
  border-radius: 2px;
  box-shadow: inset 0 0 0 1px rgba(255, 255, 255, 0.5);
  background: ${props => (props.$active ? "linear-gradient(#c8dcf0, #a4bcd8 48%, #88a4c4 52%, #b0cce4)" : "transparent")};
  ${props => (props.$red ? redCaption : "")}
`;

const redCaption = css`
  border-color: #5c1810;
  background: linear-gradient(#e4a494, #cc5c48 48%, #b83420 52%, #dc7858);
`;

const client = css`
  flex: 1;
  min-height: 0;
  border: 1px solid #68747e;
  border-right-color: #fff;
  border-bottom-color: #fff;
`;

const SchematicClient = styled.div`
  ${client}
  display: grid;
  grid-template-columns: minmax(0, 1fr) 17px;
  grid-template-rows: minmax(0, 1fr) 17px;
  background: #f0f0f0;
`;

const Canvas = styled.div`
  overflow: hidden;
  background: #c0c0c0;
`;

const SchematicSvg = styled.svg`
  max-width: none;
`;

const PartText = styled.g`
  font-family: "Liberation Sans", sans-serif;
  font-size: 8px;
  text-anchor: middle;
  fill: #101010;
`;

const NetText = styled.text`
  fill: #0000c8;
`;

const PlotClient = styled.div`
  ${client}
  display: flex;
  margin-left: 1px;
  margin-right: -1px;
  background: #000;
`;

const PlotSvg = styled.svg`
  flex: 1;
  min-width: 0;
`;

const AxisText = styled.g`
  font-family: "Liberation Sans", sans-serif;
  font-size: 14px;
  fill: #b8b8b8;
`;

const TraceText = styled.text`
  font-family: "Liberation Sans", sans-serif;
  font-size: 12px;
  font-weight: bold;
  text-anchor: middle;
`;

const ScrollBar = styled.div`
  display: flex;
  flex-direction: ${props => (props.$vertical ? "column" : "row")};
  background: #ececec;
`;

const ScrollArrow = styled.button`
  ${center}
  flex: none;
  width: 17px;
  height: 17px;
`;

const ScrollSpace = styled.div`
  flex: ${props => props.$size} 0 0;
`;

const ScrollThumb = styled.div`
  ${center}
  flex: ${props => props.$size} 0 0;
  margin: ${props => (props.$vertical ? "0 1px" : "1px 0")};
  border: 1px solid #949494;
  border-radius: 2px;
  background: linear-gradient(${props => (props.$vertical ? "90deg" : "180deg")}, #f6f6f6, #e2e2e4 48%, #cfcfd1 52%, #c2c2c4);
`;

const Grip = styled.span`
  width: ${props => (props.$vertical ? 7 : 8)}px;
  height: ${props => (props.$vertical ? 8 : 7)}px;
  background: repeating-linear-gradient(
    ${props => (props.$vertical ? "180deg" : "90deg")},
    #606060 0,
    #606060 2px,
    #f4f4f4 2px,
    #f4f4f4 3px
  );
`;

const SizeGrip = styled.svg`
  width: 17px;
  height: 17px;
`;

const MinimizedRow = styled.div`
  display: flex;
  height: 26px;
`;

const MinimizedWindow = styled.div`
  display: flex;
  flex: 0 1 160px;
  align-items: center;
  gap: 4px;
  min-width: 0;
  height: 26px;
  padding: 0 4px 0 3px;
  border: 1px solid #50585c;
  border-radius: 6px 6px 0 0;
  background: linear-gradient(#bccada, #d8e4f0);
  color: #4c545c;
`;

const MinimizedTitle = styled.span`
  flex: 1;
  min-width: 0;
  white-space: nowrap;
`;

const StatusBar = styled.footer`
  display: flex;
  align-items: center;
  gap: 10px;
  height: 19px;
  padding-left: 2px;
  border-top: 1px solid #fff;
  background: #f0eeec;
`;

const Taskbar = styled.div`
  display: flex;
  align-items: center;
  height: 40px;
  border-top: 1px solid #101818;
  box-shadow: inset 0 1px 0 #90a0a0;
  background: radial-gradient(ellipse 90px 40px at 800px 30px, #68807c, transparent),
    radial-gradient(ellipse 120px 40px at 1060px 20px, #5c7470, transparent),
    linear-gradient(90deg, #4c5c60, #44565a 40%, #4c6264 60%, #526a68 75%, #40504f 90%, #3c4a4c);
`;

const StartButton = styled.button`
  ${center}
  width: 54px;
  height: 39px;
  margin-right: 6px;
`;

const TaskSlot = styled.div`
  display: flex;
  width: 58px;
  height: 38px;
  margin-right: 4px;
`;

const TaskButton = styled.button`
  ${center}
  flex: 1;
  border-radius: 3px;
  ${props => (props.$framed ? framedTask : "")}
  ${props => (props.$current ? "background: linear-gradient(135deg, #f0f4f4, #b4c0c0 60%, #98a8a8);" : "")}
`;

const framedTask = css`
  border: 1px solid #b0bcbc;
  background: linear-gradient(135deg, #a8b4b4, #66787a 55%, #5c7072);
`;

const TaskStack = styled.div`
  width: 6px;
  margin: 0 0 0 1px;
  border: solid #94a4a4;
  border-width: 1px 1px 1px 0;
  border-radius: 0 3px 3px 0;
  background: linear-gradient(90deg, #5c7072 2px, #94a4a4 2px, #94a4a4 3px, #5c7072 3px);
`;

const Tray = styled.div`
  display: flex;
  align-items: center;
  gap: 8px;
  margin-left: auto;
  margin-right: 12px;
  color: #fff;
`;

const Language = styled.span`
  margin-right: 6px;
`;

const Clock = styled.time`
  display: flex;
  flex-direction: column;
  align-items: center;
  margin-left: 9px;
  line-height: 17px;
`;

const ShowDesktop = styled.button`
  width: 14px;
  height: 38px;
  border: 1px solid #889494;
  background: linear-gradient(135deg, #8c9898, #48585a 60%);
`;

export default App;
